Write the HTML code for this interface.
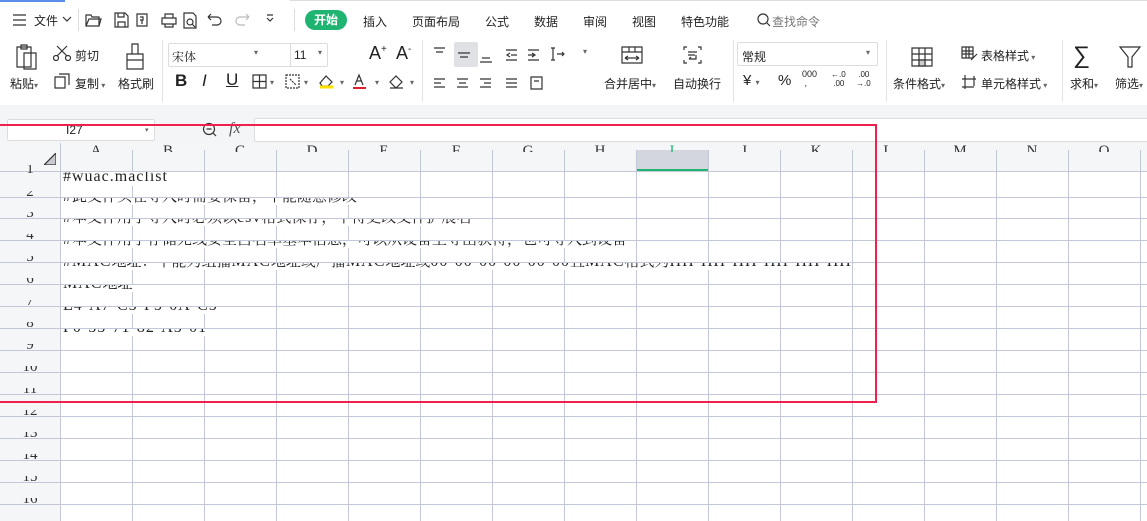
<!DOCTYPE html>
<html><head><meta charset="utf-8"><style>
*{margin:0;padding:0;box-sizing:border-box}
body{width:1147px;height:521px;overflow:hidden;background:#fff;font-family:"Liberation Sans","Noto Sans CJK SC",sans-serif;font-size:12px;color:#222;position:relative}
.a{position:absolute}
.t{position:absolute;white-space:nowrap;font-size:12px;color:#222}
svg{position:absolute;fill:none;stroke:#333;stroke-width:1.2}
.clip{position:absolute;overflow:hidden;white-space:nowrap}
.cell{font-family:"Liberation Serif","Noto Serif CJK SC",serif;font-size:15px;color:#222;background:#fff}
.l{letter-spacing:1px;font-size:16px}
</style></head><body>
<div class="a" style="left:0;top:0;width:65px;height:2px;background:#5b8def"></div>
<div class="a" style="left:290px;top:0;width:857px;height:1px;background:#ddd"></div>
<svg style="left:12px;top:13px" width="16" height="14"><path d="M1 2h13M1 7h13M1 12h13"/></svg>
<div class="t" style="left:34px;top:12px">文件</div>
<svg style="left:62px;top:16px" width="10" height="8" stroke="#999"><path d="M1 1l4 4 4-4"/></svg>
<div class="a" style="left:78px;top:9px;width:1px;height:22px;background:#ddd"></div>
<svg style="left:84px;top:11px" width="190" height="18">
<path d="M2 4h5l1 2h7v9H2z M2 15l3-7h12l-2 7"/>
<path d="M31 2h10l3 3v11H31z M34 2v4h6V2 M34 16v-5h7v5"/>
<path d="M53 3h10v12H53z M56 6h3v3h-3 M58 9v4"/>
<path d="M78 7h14v6H78z M81 7V3h8v4 M81 13v3h8v-3"/>
<path d="M100 2h9l3 3v12h-12z M106 11m-3 0a3 3 0 1 0 6 0a3 3 0 1 0-6 0 M108 13l3 3"/>
<path d="M124 6h9a4 4 0 0 1 0 8h-5 M124 6l3-3 M124 6l3 3"/>
<path d="M165 6h-9a4 4 0 0 0 0 8h5 M165 6l-3-3 M165 6l-3 3" stroke="#bbb"/>
<path d="M183 7l3 3 3-3 M183 4h6"/>
</svg>
<div class="a" style="left:294px;top:9px;width:1px;height:22px;background:#ddd"></div>
<div class="a" style="left:305px;top:10px;width:42px;height:20px;border-radius:10px;background:#20b472;color:#fff;font-weight:bold;text-align:center;line-height:20px;font-size:12px">开始</div>
<div class="t" style="left:363px;top:13px">插入</div>
<div class="t" style="left:412px;top:13px">页面布局</div>
<div class="t" style="left:485px;top:13px">公式</div>
<div class="t" style="left:534px;top:13px">数据</div>
<div class="t" style="left:583px;top:13px">审阅</div>
<div class="t" style="left:632px;top:13px">视图</div>
<div class="t" style="left:681px;top:13px">特色功能</div>
<svg style="left:757px;top:13px" width="14" height="14" stroke="#888"><circle cx="6" cy="6" r="5"/><path d="M10 10l3 3"/></svg>
<div class="t" style="left:772px;top:13px;color:#777">查找命令</div>
<svg style="left:14px;top:43px" width="26" height="28"><path d="M3 4h14v20H3z M7 2h6v4H7z M10 10h12v16H10z" /></svg>
<div class="t" style="left:10px;top:75px">粘贴<span style="font-size:8px;color:#666">▾</span></div>
<svg style="left:53px;top:45px" width="18" height="16"><circle cx="3" cy="13" r="2.5"/><circle cx="15" cy="13" r="2.5"/><path d="M4 11L14 1 M14 11L4 1"/></svg>
<div class="t" style="left:75px;top:47px">剪切</div>
<svg style="left:54px;top:73px" width="16" height="16"><path d="M1 4h10v11H1z M5 1h10v11"/></svg>
<div class="t" style="left:75px;top:75px">复制<span style="font-size:8px;color:#666"> ▾</span></div>
<svg style="left:124px;top:43px" width="22" height="28"><path d="M8 1h6v10H8z M3 11h16v6H3z M3 17h16v9H3z"/></svg>
<div class="t" style="left:118px;top:75px">格式刷</div>
<div class="a" style="left:162px;top:40px;width:1px;height:62px;background:#e3e3e3"></div>
<div class="a" style="left:168px;top:43px;width:160px;height:24px;border:1px solid #ddd;border-radius:2px"></div>
<div class="a" style="left:290px;top:44px;width:1px;height:22px;background:#ddd"></div>
<div class="t" style="left:172px;top:48px;font-family:'Noto Serif CJK SC',serif">宋体</div>
<div class="t" style="left:254px;top:48px;font-size:8px;color:#666">▾</div>
<div class="t" style="left:294px;top:48px">11</div>
<div class="t" style="left:318px;top:48px;font-size:8px;color:#666">▾</div>
<div class="t" style="left:369px;top:43px;font-size:18px">A<sup style="font-size:10px">+</sup></div>
<div class="t" style="left:396px;top:43px;font-size:18px">A<sup style="font-size:10px">-</sup></div>
<div class="t" style="left:175px;top:71px;font-size:17px;font-weight:bold">B</div>
<div class="t" style="left:202px;top:71px;font-size:17px;font-style:italic">I</div>
<div class="t" style="left:226px;top:70px;font-size:17px;text-decoration:underline">U</div>
<svg style="left:252px;top:73px" width="160" height="18">
<path d="M1 2h13v13H1z M7.5 2v13 M1 8.5h13"/>
<path d="M34 2h13v13H34z M38 6l6 6" stroke-dasharray="2 1"/>
<path d="M68 10l6-7 6 6-4 4h-6z" /><path d="M68 14h13" stroke="#ffe000" stroke-width="3"/>
<path d="M103 12l4-10 4 10 M105 8h5"/><path d="M101 15h13" stroke="#e0202a" stroke-width="2"/>
<path d="M138 9l6-6 6 6-6 6z M138 15h13"/>
</svg>
<div class="t" style="left:270px;top:78px;font-size:8px;color:#666">▾</div>
<div class="t" style="left:304px;top:78px;font-size:8px;color:#666">▾</div>
<div class="t" style="left:340px;top:78px;font-size:8px;color:#666">▾</div>
<div class="t" style="left:375px;top:78px;font-size:8px;color:#666">▾</div>
<div class="t" style="left:410px;top:78px;font-size:8px;color:#666">▾</div>
<div class="a" style="left:422px;top:40px;width:1px;height:62px;background:#e3e3e3"></div>
<div class="a" style="left:454px;top:42px;width:24px;height:25px;background:#dfe1e5;border-radius:2px"></div>
<svg style="left:432px;top:45px" width="170" height="45">
<path d="M2 3h11M4 7h7"/><path d="M26 8h12M28 12h8"/><path d="M50 13h8M48 17h12"/>
<path d="M74 5h11M79 10h6M74 15h11M78 8l-3 2 3 2"/><path d="M96 5h11M96 10h6M96 15h11M100 8l3 2-3 2"/>
<path d="M121 3v12M119 3h4M119 15h4M125 9h7M130 7l2 2-2 2"/>
<path d="M2 34h11M2 38h7M2 42h11"/><path d="M25 34h11M27 38h7M25 42h11"/><path d="M48 34h11M52 38h7M48 42h11"/><path d="M74 34h11M74 38h11M74 42h11"/>
<path d="M99 32h11v12H99z M102 36h5"/>
</svg>
<div class="t" style="left:583px;top:47px;font-size:8px;color:#666">▾</div>
<svg style="left:620px;top:45px" width="100" height="22"><path d="M2 2h20v16H2z M2 7h20 M9 2v5 M15 2v5 M5 13h14 M5 13l3-2 M5 13l3 2 M19 13l-3-2 M19 13l-3 2"/>
<path d="M67 2h-3v3 M78 2h3v3 M67 18h-3v-3 M78 18h3v-3 M68 7h9 M68 10h7 M76 10v4h-7 M69 14l2-2"/></svg>
<div class="t" style="left:604px;top:75px">合并居中<span style="font-size:8px;color:#666">▾</span></div>
<div class="t" style="left:673px;top:75px">自动换行</div>
<div class="a" style="left:733px;top:40px;width:1px;height:62px;background:#e3e3e3"></div>
<div class="a" style="left:737px;top:42px;width:141px;height:24px;border:1px solid #ddd;border-radius:2px"></div>
<div class="t" style="left:742px;top:48px">常规</div>
<div class="t" style="left:866px;top:48px;font-size:8px;color:#666">▾</div>
<div class="t" style="left:743px;top:72px;font-size:15px">¥ <span style="font-size:8px;color:#666">▾</span></div>
<div class="t" style="left:778px;top:72px;font-size:15px">%</div>
<div class="t" style="left:802px;top:70px;font-size:9px;line-height:9px">000<br>&nbsp;,</div>
<div class="t" style="left:831px;top:70px;font-size:8px;line-height:9px">←.0<br>&nbsp;.00</div>
<div class="t" style="left:856px;top:70px;font-size:8px;line-height:9px">&nbsp;.00<br>→.0</div>
<div class="a" style="left:886px;top:40px;width:1px;height:62px;background:#e3e3e3"></div>
<svg style="left:910px;top:46px" width="24" height="22"><path d="M2 2h20v18H2z M2 8h20M2 14h20M9 2v18M15 2v18"/><path d="M9 14h6v6H9z" fill="#ccc"/></svg>
<div class="t" style="left:893px;top:75px">条件格式<span style="font-size:8px;color:#666">▾</span></div>
<svg style="left:960px;top:45px" width="20" height="46"><path d="M2 2h11v11H2z M2 6h11M2 9h11M6 2v11M9 2v11 M11 15l6-6"/><path d="M2 34h14M5 30v14M2 42h12M14 31v10"/></svg>
<div class="t" style="left:981px;top:47px">表格样式<span style="font-size:8px;color:#666"> ▾</span></div>
<div class="t" style="left:981px;top:75px">单元格样式<span style="font-size:8px;color:#666"> ▾</span></div>
<div class="a" style="left:1062px;top:40px;width:1px;height:62px;background:#e3e3e3"></div>
<div class="t" style="left:1073px;top:42px;font-size:24px;font-weight:normal">∑</div>
<svg style="left:1118px;top:45px" width="24" height="24"><path d="M2 2h20l-8 10v10h-4V12z"/></svg>
<div class="t" style="left:1070px;top:75px">求和<span style="font-size:8px;color:#666">▾</span></div>
<div class="t" style="left:1115px;top:75px">筛选<span style="font-size:8px;color:#666">▾</span></div>
<div class="a" style="left:0;top:105px;width:1147px;height:38px;background:#f4f5f7"></div>
<div class="a" style="left:7px;top:119px;width:148px;height:22px;border:1px solid #ddd;background:#fff;border-radius:2px"></div>
<div class="t" style="left:66px;top:123px;font-size:12px">I27</div>
<div class="t" style="left:145px;top:126px;font-size:7px;color:#666">▾</div>
<svg style="left:202px;top:122px" width="16" height="16" stroke="#555"><circle cx="7" cy="7" r="5.5"/><path d="M4.5 7h5 M11 11l3 3"/></svg>
<div class="t" style="left:229px;top:120px;font-size:16px;font-style:italic;font-family:'Liberation Serif',serif;color:#555">fx</div>
<div class="a" style="left:254px;top:118px;width:900px;height:24px;border:1px solid #ddd;background:#fff;border-radius:2px"></div>
<div class="a" style="left:0;top:143px;width:1147px;height:28px;background:#f5f6f8"></div>
<div class="a" style="left:0;top:171px;width:60px;height:350px;background:#f5f6f8"></div>
<div class="a" style="left:636px;top:150px;width:72px;height:21px;background:#d3d6dc"></div>
<div class="a" style="left:636px;top:169px;width:72px;height:2px;background:#20b472"></div>
<svg style="left:44px;top:153px" width="12" height="12" stroke="none"><path d="M12 0V12H0z" fill="#c8cacf"/></svg>
<svg style="left:0;top:143px;stroke:#c3c8d6;stroke-width:1" width="1147" height="378" id="g"></svg>
<div id="cells"></div>
<div class="a" style="left:-2px;top:124px;width:879px;height:279px;border:2px solid #f0204e"></div>
<script>
var g=document.getElementById('g');var d='';
var rows=[171,197,218,240,262,284,306,328,350,372,394,416,438,460,482,504];
rows.forEach(function(y){d+='M0 '+(y-143+.5)+'H1147 ';});
d+='M60.5 0V378 ';
for(var x=132;x<1147;x+=72)d+='M'+(x+.5)+' 7V378 ';
g.innerHTML='<path d="'+d+'"/>';
var letters='ABCDEFGHIJKLMNO';var h='';
for(var i=0;i<15;i++){var cx=60+i*72;h+='<div class="clip" style="left:'+cx+'px;top:145px;width:72px;height:7px;text-align:center"><div style="font-family:Liberation Serif,serif;font-size:15px;line-height:15px;margin-top:-1px;color:'+(i==8?'#20b472':'#333')+'">'+letters[i]+'</div></div>';}
for(var r=0;r<16;r++){var y=rows[r];h+='<div class="clip" style="left:0;top:'+(y-6)+'px;width:60px;height:'+(r==0?10:8)+'px;text-align:center"><div style="font-family:Liberation Serif,serif;font-size:15px;line-height:15px;margin-top:'+(r==0?-3:-6)+'px;color:#333">'+(r+1)+'</div></div>';}
var tx=['#wuac.maclist','#此文件头在导入时需要保留，不能随意修改','#本文件用于导入时必须以csv格式保存，不得更改文件扩展名','#本文件用于存储无线安全白名单基本信息，可以从设备上导出获得，也可导入到设备','#MAC地址：不能为组播MAC地址或广播MAC地址或00-00-00-00-00-00且MAC格式为HH-HH-HH-HH-HH-HH','MAC地址','E4-A7-C5-F5-0A-C5','F0-55-71-82-A5-01'];
tx.forEach(function(s,r){var y=rows[r]+1;var hh=r==0?14:7;s=s.replace(/([#A-Za-z0-9.\-]+)/g,'<span class="l">$1</span>');h+='<div class="clip cell" style="left:63px;top:'+y+'px;height:'+hh+'px;max-width:'+(r==4?788:780)+'px;padding-right:2px"><div style="line-height:18px;margin-top:'+(r==0?-4:-10)+'px">'+s+'</div></div>';});
document.getElementById('cells').innerHTML=h;
</script>
</body></html>
